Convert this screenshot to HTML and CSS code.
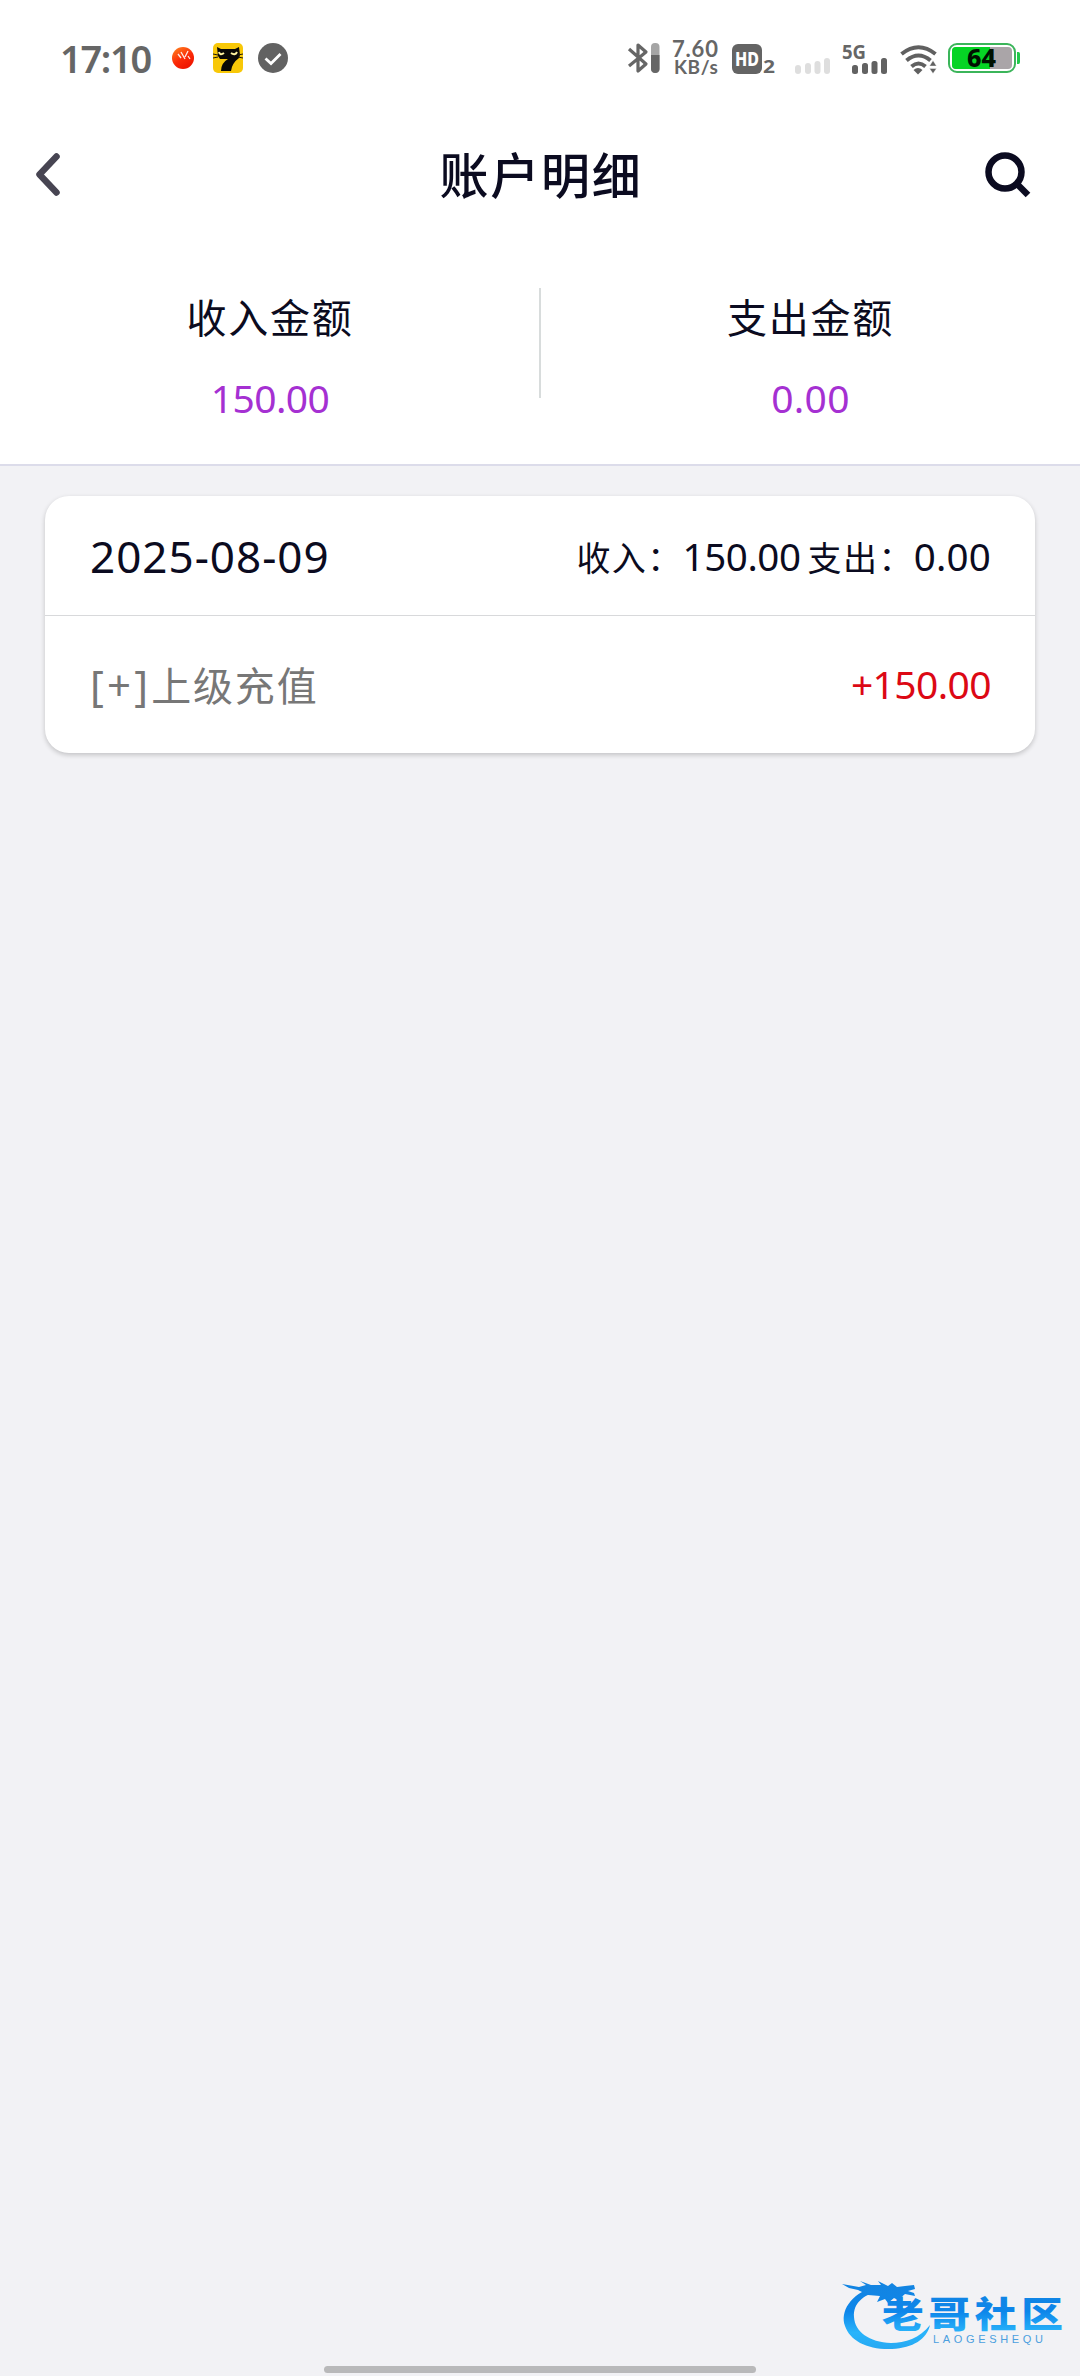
FILE: index.html
```html
<!DOCTYPE html>
<html lang="zh-CN">
<head>
<meta charset="utf-8">
<meta name="viewport" content="width=device-width">
<title>账户明细</title>
<link rel="stylesheet" href="styles.css">
</head>
<body>
<div class="top">
  <div class="status">
    <span class="clock">17:10</span>
    <svg class="notices" width="120" height="34" viewBox="170 41 120 34">
      <defs><linearGradient id="ball" x1="0" y1="0" x2="0.6" y2="1"><stop offset="0" stop-color="#ff8a20"/><stop offset=".6" stop-color="#fb2a08"/><stop offset="1" stop-color="#ee1500"/></linearGradient></defs>
      <circle cx="183" cy="58" r="11" fill="url(#ball)"/>
      <path d="M178 54l3 4M181 52l4 7M188 51l-3 6M188 56l2 3" stroke="#fff" stroke-width="1.3" opacity=".9"/>
      <rect x="213" y="43" width="30" height="30" rx="5" fill="#f8c808"/>
      <path d="M217 47l4 2h14l4-2 1 8-1 3q-7 5-8 13h-10q0-8 7-12h-8l-2-3z" fill="#090806"/>
      <path d="M219 52q1 4 5 1M231 53q4 3 6-1" stroke="#fff3a0" stroke-width="2" fill="none"/>
      <path d="M213 54l5 1M213 58l5-1M238 55l5-1M238 57l5 1" stroke="#211c08"/>
      <circle cx="273" cy="58" r="15" fill="#626262"/>
      <path d="M265.500 58.500l5.500 5 9.500-9.500" fill="none" stroke="#fff" stroke-width="2.800"/>
    </svg>
    <svg class="bluetooth" width="34" height="32" viewBox="627 42 34 32">
      <path d="M629 49l17 15-8 7V45l8 7-17 14" fill="none" stroke="#666" stroke-width="3.200" stroke-linejoin="round"/>
      <rect x="651" y="43" width="8.500" height="30" rx="4" fill="#a5a5a5"/>
      <path d="M651 55h8.500v14a4.250 4 0 0 1-8.500 0z" fill="#666"/>
    </svg>
    <span class="speed"><b>7.60</b><b class="unit">KB/s</b></span>
    <svg class="radios" width="216" height="38" viewBox="730 38 216 38">
      <rect x="732" y="43" width="30" height="30" rx="6" fill="#646464"/>
      <text x="735" y="65" class="hd" textLength="24" lengthAdjust="spacingAndGlyphs">HD</text>
      <text x="763" y="72" class="sim" textLength="12" lengthAdjust="spacingAndGlyphs">2</text>
      <g fill="#dedede"><rect x="795" y="64" width="6" height="9" rx="3"/><rect x="805" y="62" width="6" height="11" rx="3"/><rect x="814.500" y="60" width="6" height="13" rx="3"/><rect x="824" y="57" width="6" height="16" rx="3"/></g>
      <text x="842" y="57.500" class="net" textLength="24" lengthAdjust="spacingAndGlyphs">5G</text>
      <g fill="#626262"><rect x="852" y="64" width="6" height="9" rx="2.500"/><rect x="862" y="62" width="6" height="11" rx="2.500"/><rect x="871.500" y="60" width="6" height="13" rx="2.500"/><rect x="881" y="57" width="6" height="16" rx="2.500"/></g>
      <g fill="none" stroke="#606060" stroke-width="4"><path d="M901.500 53q17-13.500 34 0M906.500 59.500q12-10 24 0M911.500 65.500q7-6 14 0"/></g>
      <path d="M913.500 69q4.500-4 9 0l-4.500 4.500z" fill="#606060"/>
      <path d="M929.500 65l3.500-5.500 3.500 5.500zM929.500 67.500h7l-3.500 5z" fill="#606060" stroke="#fff" stroke-width=".4"/>
    </svg>
    <svg class="battery" width="74" height="32" viewBox="947 42 74 32">
      <rect x="949" y="44" width="66" height="28" rx="8" fill="#fff" stroke="#3bb55a" stroke-width="2"/>
      <path d="M1017 52h1.500q1.500 0 1.500 2v8q0 2-1.500 2h-1.500z" fill="#20c94a"/>
      <rect x="952" y="47" width="60" height="22" rx="4" fill="#aaa5a8"/>
      <path d="M956 47h34v22h-34q-4 0-4-4V51q0-4 4-4z" fill="#06d425"/>
      <text x="967" y="66.500" class="charge" textLength="29" lengthAdjust="spacingAndGlyphs">64</text>
    </svg>
  </div>
  <header class="nav">
    <svg width="50" height="60" viewBox="28 144 50 60"><path d="M56.500 156.500L39.500 174.500 56.500 192.500" fill="none" stroke="#474552" stroke-width="6.500" stroke-linecap="round" stroke-linejoin="round"/></svg>
    <h1>账户明细</h1>
    <svg width="50" height="50" viewBox="983 148 50 50"><circle cx="1005" cy="171" r="16.500" fill="none" stroke="#0b0b20" stroke-width="6.500"/><path d="M1016 182l12 12" stroke="#0b0b20" stroke-width="6.500"/></svg>
  </header>
  <section class="summary">
    <div class="total"><span class="label">收入金额</span><span class="amount income">150.00</span></div>
    <div class="total"><span class="label">支出金额</span><span class="amount">0.00</span></div>
  </section>
</div>
<main class="card">
  <div class="day"><span class="date">2025-08-09</span><span class="sums"><span>收入：<i class="income">150.00</i></span><span>支出：<i>0.00</i></span></span></div>
  <div class="entry"><span class="kind"><i>[+]</i>上级充值</span><span class="value">+150.00</span></div>
</main>
<svg class="watermark" width="232" height="80" viewBox="840 2276 232 80">
  <defs><linearGradient id="blue" gradientUnits="userSpaceOnUse" x1="0" y1="2280" x2="0" y2="2350"><stop offset="0" stop-color="#1484e0"/><stop offset=".45" stop-color="#0d86ea"/><stop offset=".75" stop-color="#29b4fb"/><stop offset="1" stop-color="#26a8f2"/></linearGradient></defs>
  <path d="M874 2287C850 2294 840 2312 845 2326C850 2341 868 2350 892 2349C913 2348 927 2339 930 2325C920 2338 905 2343 891 2343C869 2342 855 2332 854 2317C853 2303 864 2295 876 2292z" fill="url(#blue)"/>
  <path d="M842 2284l17 3 7-2-6-4 11 4h10l-3-4 10 5 4-3 5 4 8-1 9-1 1 4-7 2 6 2 1 3-10-2-7 6-4-2-6 5-3-4-8 3 3-6-12-1-10-5-9-2z" fill="url(#blue)"/>
  <g transform="translate(882 0) scale(1.16 1)"><text x="0" y="2328.500" class="brand" textLength="156" lengthAdjust="spacing">老哥社区</text></g>
  <text x="933" y="2342.500" class="roman" textLength="110" lengthAdjust="spacing">LAOGESHEQU</text>
</svg>
<div class="home"></div>
</body>
</html>
```
FILE: styles.css
```css
* { box-sizing: border-box; }
body {
  margin: 0;
  height: 2376px;
  position: relative;
  background: #f2f2f5;
  color: #0b0b20;
  font-family: "Noto Sans", "Noto Sans CJK SC", sans-serif;
}
svg { display: block; flex: none; }
i { font-style: normal; }
.top { height: 466px; background: #fff; border-bottom: 2px solid #dcdcea; }
.status { height: 116px; display: flex; align-items: center; padding: 0 59px 0 60px; color: #666; }
.clock { width: 110px; padding-bottom: 1px; font-size: 38px; font-weight: 600; line-height: 54px; letter-spacing: -1.3px; white-space: nowrap; }
.bluetooth { margin-left: 337px; }
.speed { width: 69px; display: flex; flex-direction: column; padding-left: 11px; font-family: Lato, sans-serif; }
.speed b { height: 18px; font-size: 22px; line-height: 18px; letter-spacing: .8px; }
.speed .unit { font-size: 19px; letter-spacing: .6px; padding-left: 2px; }
.battery { margin-left: 1px; }
.hd { font: 800 19px "Noto Sans", sans-serif; fill: #fff; }
.sim { font: 700 17px "Noto Sans", sans-serif; fill: #666; }
.net { font: 700 20px "Noto Sans", sans-serif; fill: #666; }
.charge { font: 800 25px "Noto Sans", sans-serif; fill: #001000; }
.nav { height: 116px; display: grid; grid-template-columns: 50px 1fr 50px; align-items: center; padding: 0 47px 0 28px; }
.nav h1 { margin: 0; padding: 0 0 2px 21px; text-align: center; font: 500 49px/70px "Noto Sans CJK SC", sans-serif; letter-spacing: 1.8px; }
.summary { display: grid; grid-template-columns: 1fr 1fr; height: 232px; padding-top: 56px; }
.total { height: 110px; display: flex; flex-direction: column; align-items: center; }
.total:first-child { position: relative; }
.total + .total { border-left: 2px solid #d8dcdc; margin-left: -1px; }
.label { font-size: 40px; line-height: 60px; letter-spacing: 1.8px; }
.amount { margin-top: 20px; font-size: 39px; line-height: 60px; letter-spacing: .3px; color: #a530d2; }
.amount.income { letter-spacing: -.6px; }
.card { margin: 30px 45px 0; height: 257px; background: #fff; border-radius: 24px; box-shadow: 0 2px 5px rgba(0, 0, 0, .2); }
.day { height: 120px; display: flex; align-items: center; justify-content: space-between; padding: 1px 44px 0 45px; border-bottom: 1px solid #d8d9db; }
.date { font-size: 44px; letter-spacing: 1px; }
.sums { display: flex; gap: 7px; font-size: 34px; letter-spacing: 1.4px; }
.sums i { font-size: 38.5px; letter-spacing: .2px; }
.sums .income { letter-spacing: -.4px; }
.entry { height: 137px; display: flex; align-items: center; justify-content: space-between; padding: 0 44px 2px 45px; }
.kind { font-size: 40px; letter-spacing: 1.8px; color: #777; }
.kind i { font-size: 42px; letter-spacing: 3.2px; }
.value { font-size: 39px; letter-spacing: -.6px; color: #dc0814; }
.watermark { position: absolute; left: 840px; top: 2276px; }
.brand { font: 900 36px "Noto Sans CJK SC", sans-serif; fill: url(#blue); }
.roman { font: 400 11px "Liberation Sans", sans-serif; fill: #4b9fdf; }
.home { position: absolute; left: 324px; bottom: 3px; width: 432px; height: 7px; border-radius: 4px; background: #b9b9ba; }
```
